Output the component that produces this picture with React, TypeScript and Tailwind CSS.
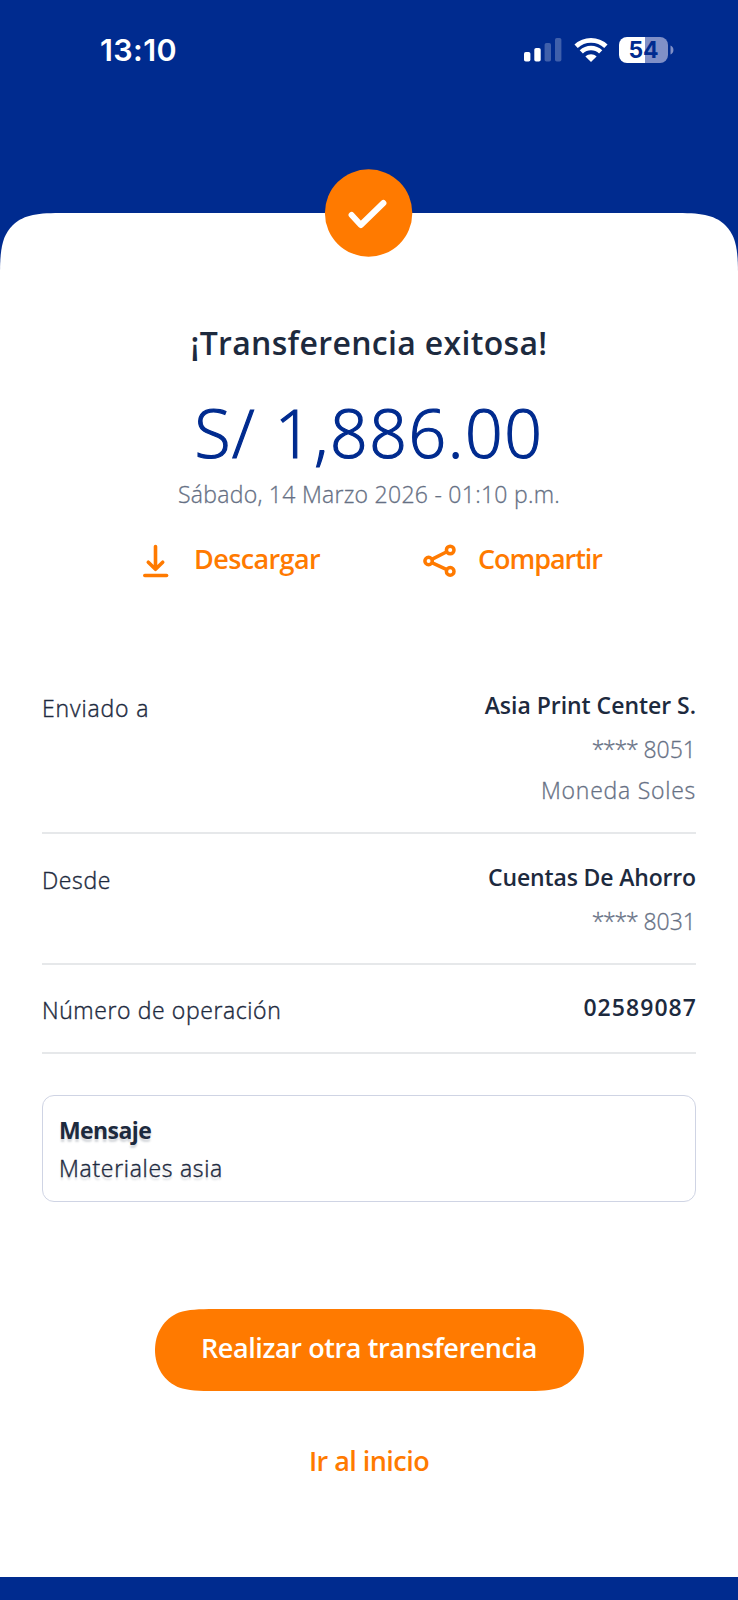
import type { ReactNode } from "react";

function StatusBar() {
  return (
    <div className="flex h-[100px] items-center justify-between pl-[100px] pr-[64px] font-['Inter',sans-serif]">
      <span className="text-[30.5px] font-semibold leading-[40px] tracking-[0.4px] text-white">13:10</span>
      <div className="flex items-center">
        <svg className="h-[26px] w-[38px]" viewBox="0 0 38 26" fill="#fff">
          <rect x="0" y="15" width="6.4" height="9.5" rx="1.8" />
          <rect x="10.3" y="11" width="6.4" height="13.5" rx="1.8" />
          <rect x="20.6" y="6" width="6.4" height="18.5" rx="1.8" opacity="0.25" />
          <rect x="31" y="1" width="6.4" height="23.5" rx="1.8" opacity="0.25" />
        </svg>
        <svg className="ml-3 h-[26px] w-[34px]" viewBox="0 0 34 26" fill="none" stroke="#fff">
          <path d="M2.1 9.3 C10.4 1.4 23.6 1.4 31.9 9.3" strokeWidth="4.8" />
          <path d="M7.3 14.9 C12.8 9.6 21.2 9.6 26.7 14.9" strokeWidth="4.6" />
          <path d="M11.4 19.4 C14.6 16.4 19.4 16.4 22.6 19.4 L17 25 Z" fill="#fff" stroke="none" />
        </svg>
        <div className="ml-[11px] mr-px flex h-[26px] w-[49px] items-center justify-center overflow-hidden rounded-[8px] bg-[linear-gradient(to_right,#fff_54%,#8090c7_54%)] text-[23px] font-bold leading-[26px] tracking-[-0.2px] text-[#002b8f]">
          54
        </div>
        <svg className="ml-[1px] h-[10px] w-[4px]" viewBox="0 0 4 10" fill="#8090c7">
          <path d="M0.5 0.5 C4.4 2 4.4 8 0.5 9.5 Z" />
        </svg>
      </div>
    </div>
  );
}

function DownloadIcon() {
  return (
    <svg className="h-[34px] w-[26px]" viewBox="0 0 26 34" fill="none" stroke="#ff7a00" strokeWidth="3.6" strokeLinecap="round" strokeLinejoin="round">
      <path d="M12.5 2.5 V25 M5.3 18.2 L12.5 25.3 L19.7 18.2" />
      <path d="M1.8 31.5 H23.6" />
    </svg>
  );
}

function ShareIcon() {
  return (
    <svg className="h-[34px] w-[34px]" viewBox="0 0 34 34" fill="none" stroke="#ff7a00" strokeWidth="3.5">
      <circle cx="5.6" cy="17" r="3.7" />
      <circle cx="27.2" cy="6" r="3.8" />
      <circle cx="27.2" cy="27.4" r="3.8" />
      <path d="M8.8 15.4 L23.8 7.8 M8.8 18.6 L23.8 25.7" />
    </svg>
  );
}

function Row({ label, children, className }: { label: ReactNode; children: ReactNode; className: string }) {
  return (
    <div className={"flex items-start justify-between border-b-2 border-[#e6e8ea] " + className}>
      <div className="pt-[3px] text-[23px] font-light leading-[32px] text-[#1d2a3e] [-webkit-text-stroke:0.4px_#1d2a3e]">{label}</div>
      <div className="flex flex-col items-end text-[23px] leading-[32px]">{children}</div>
    </div>
  );
}

function MaskedAccount({ digits }: { digits: string }) {
  return (
    <span className="mt-[12px] font-light text-[#667084] [-webkit-text-stroke:0.3px_#667084]">
      <span className="tracking-[-1.2px]">****</span> {digits}
    </span>
  );
}

export default function App() {
  return (
    <div className="flex h-[1600px] w-[738px] flex-col bg-[#002b8f] font-['Open_Sans','Noto_Sans',sans-serif]">
      <header className="h-[213px] shrink-0">
        <StatusBar />
      </header>
      <main className="relative flex h-[1364px] shrink-0 flex-col">
        <svg className="h-[60px] w-full shrink-0" viewBox="0 0 738 60" fill="#fff">
          <path d="M0 60 C0 34 3 22 12.5 12.5 C22 3 34 0 60 0 H678 C704 0 716 3 725.5 12.5 C735 22 738 34 738 60 Z" />
        </svg>
        <svg className="absolute left-[324px] top-[-44px] h-[88px] w-[89px]" viewBox="0 0 89 88">
          <circle cx="44.6" cy="44" r="43.7" fill="#ff7a00" />
          <path d="M27.6 46 L36.8 56 L59.4 34" fill="none" stroke="#fff" strokeWidth="6" strokeLinecap="round" strokeLinejoin="round" />
        </svg>
        <div className="flex flex-1 flex-col bg-white px-[42px]">
          <h1 className="mt-[48px] text-center text-[32px] font-semibold leading-[44px] tracking-[0.32px] text-[#1d2a3e]">
            ¡Transferencia exitosa!
          </h1>
          <div className="mt-[25px] text-center text-[66px] font-light leading-[84px] tracking-[1.6px] text-[#002b8f] [-webkit-text-stroke:1.2px_#002b8f]">
            S/ 1,886.00
          </div>
          <div className="mt-[4px] text-center text-[23px] font-light leading-[32px] tracking-[0.27px] text-[#667084] [-webkit-text-stroke:0.3px_#667084]">
            Sábado, 14 Marzo 2026 - 01:10 p.m.
          </div>
          <div className="mt-[33px] flex h-[36px] items-center pl-[101px] text-[27px] font-semibold leading-[36px] text-[#ff7a00]">
            <button className="flex w-[280px] items-center gap-[25px]">
              <DownloadIcon />
              <span className="pb-[5px] tracking-[-0.6px]">Descargar</span>
            </button>
            <button className="flex items-center gap-[21px]">
              <ShareIcon />
              <span className="pb-[5px] tracking-[-1.05px]">Compartir</span>
            </button>
          </div>

          <section className="mt-[110px] flex flex-col">
            <Row className="h-[145px]" label={<span className="tracking-[0.85px]">Enviado a</span>}>
              <span className="font-semibold tracking-[-0.03px] text-[#1d2a3e]">Asia Print Center S.</span>
              <MaskedAccount digits="8051" />
              <span className="mt-[9px] font-light tracking-[0.75px] text-[#667084] [-webkit-text-stroke:0.3px_#667084]">Moneda Soles</span>
            </Row>
            <Row className="h-[131px] pt-[27px]" label={<span className="tracking-[0.6px]">Desde</span>}>
              <span className="font-semibold tracking-[-0.15px] text-[#1d2a3e]">Cuentas De Ahorro</span>
              <MaskedAccount digits="8031" />
            </Row>
            <Row className="h-[89px] pt-[26px]" label={<span className="tracking-[0.6px]">Número de operación</span>}>
              <span className="mr-[-1px] font-semibold tracking-[1.05px] text-[#1d2a3e]">02589087</span>
            </Row>
          </section>

          <section className="mt-[41px] h-[107px] rounded-[12px] border border-[#cfd4e4] px-[16px] pt-[18px] text-[23px] leading-[32px] text-[#1d2a3e] [text-shadow:0_3px_2px_#1d2a3e30]">
            <div className="font-bold tracking-[-0.6px]">Mensaje</div>
            <div className="mt-[6px] font-light tracking-[0.7px] [-webkit-text-stroke:0.4px_#1d2a3e]">Materiales asia</div>
          </section>

          <button className="relative mt-[107px] h-[82px] w-[429px] self-center pb-[4px] text-[27px] font-semibold leading-[36px] tracking-[-0.4px] text-white">
            <svg className="absolute inset-0 h-[82px] w-[429px]" viewBox="0 0 429 82" fill="#ff7a00">
              <path d="M0 41 C0 24 9 9.5 24 3.5 C33 0.5 44 0 60 0 H369 C385 0 396 0.5 405 3.5 C420 9.5 429 24 429 41 C429 58 420 72.5 405 78.5 C396 81.5 385 82 369 82 H60 C44 82 33 81.5 24 78.5 C9 72.5 0 58 0 41 Z" />
            </svg>
            <span className="relative">Realizar otra transferencia</span>
          </button>
          <button className="mt-[52px] self-center text-[27px] font-semibold leading-[36px] tracking-[-0.55px] text-[#ff7a00]">
            Ir al inicio
          </button>
        </div>
      </main>
    </div>
  );
}
